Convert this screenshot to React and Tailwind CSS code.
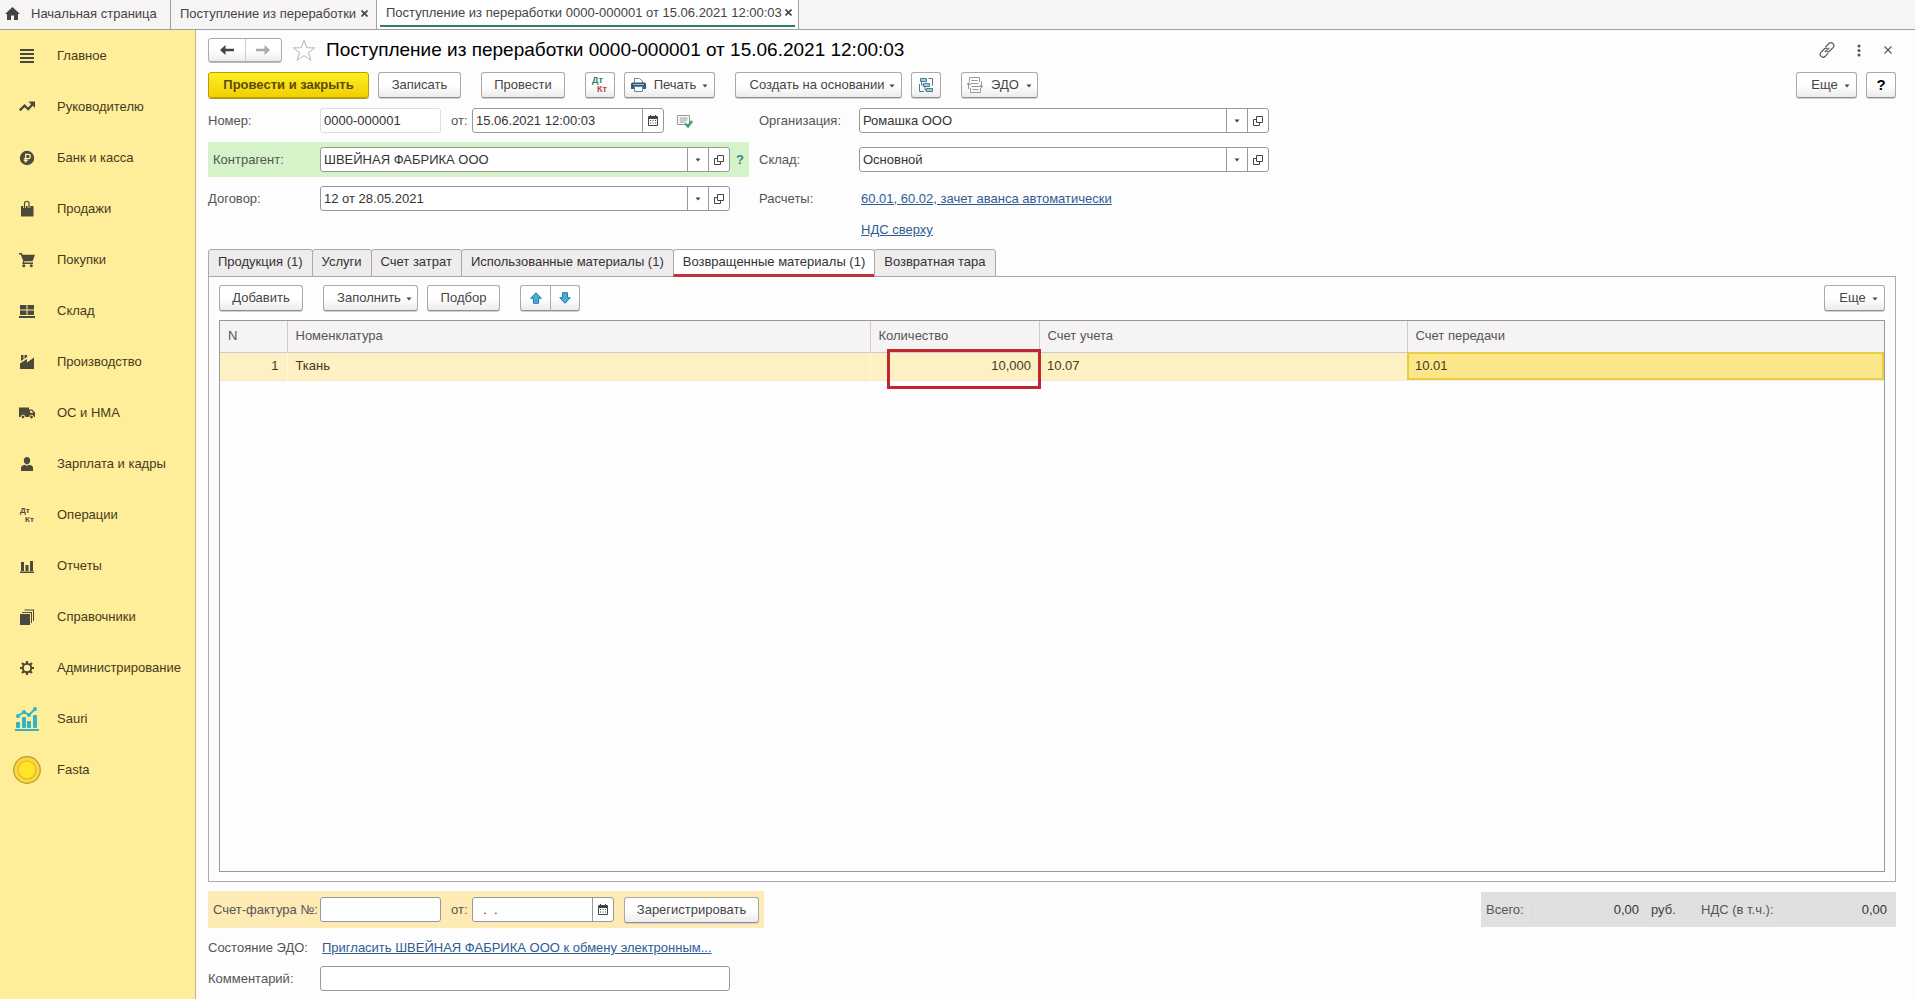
import React, { useState } from 'react'

const menu = [
  { title: "Главное", icon: "main" },
  { title: "Руководителю", icon: "trend" },
  { title: "Банк и касса", icon: "bank" },
  { title: "Продажи", icon: "bag" },
  { title: "Покупки", icon: "cart" },
  { title: "Склад", icon: "store" },
  { title: "Производство", icon: "factory" },
  { title: "ОС и НМА", icon: "truck" },
  { title: "Зарплата и кадры", icon: "person" },
  { title: "Операции", icon: "dtkt" },
  { title: "Отчеты", icon: "report" },
  { title: "Справочники", icon: "books" },
  { title: "Администрирование", icon: "gear" },
  { title: "Sauri", icon: "sauri" },
  { title: "Fasta", icon: "fasta" },
];

const tabs = [
  "Продукция (1)",
  "Услуги",
  "Счет затрат",
  "Использованные материалы (1)",
  "Возвращенные материалы (1)",
  "Возвратная тара",
];

function MenuIcon({ name }) {
  if (name === "dtkt") {
    return (
      <svg width="16" height="16" viewBox="0 0 16 16" fill="currentColor" fontFamily="Liberation Sans, sans-serif" fontWeight="bold" fontSize="8">
        <text x="1" y="6">Дт</text>
        <text x="6" y="15">Кт</text>
      </svg>
    );
  }
  if (name === "sauri") {
    return (
      <svg width="24" height="26" viewBox="0 0 24 26" fill="none">
        <g fill="#2fb4cc">
          <rect x="1" y="16" width="4" height="6" rx="1" />
          <rect x="7" y="11" width="4" height="11" rx="1" />
          <rect x="12" y="15" width="4" height="7" rx="1" />
          <rect x="18" y="9" width="4" height="13" rx="1" />
          <rect x="0" y="23" width="24" height="2" />
          <circle cx="3" cy="10" r="2" />
          <circle cx="9" cy="6" r="2" />
          <circle cx="14" cy="9" r="2" />
          <circle cx="20" cy="3" r="2" />
        </g>
        <path d="M3 10l6-4 5 3 6-6" stroke="#2fb4cc" strokeWidth="1.8" />
      </svg>
    );
  }
  if (name === "fasta") {
    return (
      <svg width="28" height="28" viewBox="0 0 28 28">
        <circle cx="14" cy="14" r="13.3" fill="#fbd63c" stroke="#b79a2c" strokeWidth="1.2" />
        <circle cx="14" cy="14" r="9" fill="#ffe525" stroke="#e0b52c" strokeWidth="1.2" />
      </svg>
    );
  }
  return (
    <svg width="16" height="16" viewBox="0 0 16 16" fill="currentColor" className="overflow-visible">
      {name === "main" && <path d="M1 1h14v2H1zM1 5h14v2H1zM1 9h14v2H1zM1 13h14v2H1z" />}
      {name === "trend" && <path d="M9.500 2.500H16V9l-2.200-2.200L9.200 11.700 5.600 8.200 1.600 12.200 0 10.600 5.600 5l3.500 3.500 2.900-3.300z" />}
      {name === "bank" && (
        <>
          <circle cx="8" cy="8" r="7.200" />
          <path d="M6.700 12.500V4.300h2.500a2.100 2.100 0 010 4.300H4.800M4.800 10.500h4" fill="none" stroke="#ffee99" strokeWidth="1.300" />
        </>
      )}
      {name === "bag" && (
        <>
          <path d="M2 5h12.500v10.500H2z" />
          <path d="M5.500 7V2.500a2.200 2.200 0 014.500 0V7" fill="none" stroke="#ffee99" strokeWidth="2.600" />
          <path d="M5.500 7V2.500a2.200 2.200 0 014.500 0V7" fill="none" stroke="currentColor" strokeWidth="1.200" />
        </>
      )}
      {name === "cart" && (
        <>
          <path d="M0 1h2.800l0.800 1.800H16L13.600 9.300H5.500L5 10.600h9V12H3.200l1-3L1.700 2.400H0z" />
          <circle cx="4.800" cy="13.800" r="1.500" />
          <circle cx="12.300" cy="13.800" r="1.500" />
        </>
      )}
      {name === "truck" && (
        <>
          <path d="M0 2.500h10v2h3.200L16 7.500V12H0z" />
          <path d="M11 5.700h1.700l1.700 2H11z" fill="#ffee99" />
          <circle cx="4" cy="12" r="1.900" stroke="#ffee99" />
          <circle cx="12.500" cy="12" r="1.900" stroke="#ffee99" />
        </>
      )}
      {name === "store" && <path d="M1 2h6.500v4.500H1zM8.500 2H15v4.500H8.500zM1 7.500h6.500V12H1zM8.500 7.500H15V12H8.500zM0 13h16v2H0z" />}
      {name === "factory" && <path d="M1 15V9.500L8 5v3.500l7-5V15zM2 1h2.500v4.300L2 7zM5.500 1H8v2L5.500 4.700z" />}
      {name === "person" && <path d="M8 1c2 0 3.200 1.500 3.200 3.600C11.200 6.800 9.800 8.500 8 8.500S4.800 6.800 4.800 4.600C4.800 2.500 6 1 8 1zM2 15v-3c0-2 1.500-2.800 3.800-3.300Q8 10.500 10.200 8.700C12.500 9.200 14 10 14 12v3z" />}
      {name === "report" && <path d="M1 13.500h14V15H1zM2 4h3v9H2zM6.500 7h3v6h-3zM11 3h3v10h-3z" />}
      {name === "books" && <path d="M1 5h10v11H1zM3 3h10v11h-1V4H3zM5.500 0.500H15V12h-1V1.500H5.500z" />}
      {name === "gear" && (
        <g fill="none" stroke="currentColor">
          <circle cx="8" cy="8" r="4.200" strokeWidth="2" />
          <path d="M8 1v2.500M8 12.500V15M1 8h2.500M12.500 8H15M3 3l1.800 1.800M11.200 11.200L13 13M3 13l1.800-1.800M11.200 4.800L13 3" strokeWidth="2.200" />
        </g>
      )}
    </svg>
  );
}

function Caret() {
  return (
    <svg width="6" height="5" viewBox="0 0 6 5" fill="#444" className="shrink-0">
      <path d="M0.500 1.500h5L3 4.500z" />
    </svg>
  );
}

function CalendarIcon() {
  return (
    <svg width="10" height="11" viewBox="0 0 10 11">
      <path d="M1 1h8a1 1 0 011 1v8a1 1 0 01-1 1H1a1 1 0 01-1-1V2a1 1 0 011-1zM1 4v6h8V4z" fill="#444" fillRule="evenodd" />
      <path d="M2 0h1v2H2zM7 0h1v2H7zM2 5h1v1H2zM4.500 5h1v1h-1zM7 5h1v1H7zM2 7.500h1v1H2zM4.500 7.500h1v1h-1zM7 7.500h1v1H7z" fill="#444" />
    </svg>
  );
}

function OpenIcon() {
  return (
    <svg width="10" height="10" viewBox="0 0 10 10" fill="none" stroke="#444">
      <path d="M3.500 0.500h6v6h-6zM3.500 3.500h-3v6h6v-3" />
    </svg>
  );
}

function Button({ children, className = "", ...rest }) {
  return (
    <button
      type="button"
      className={"flex h-[26px] shrink-0 items-center justify-center rounded-[3px] border border-[#a9a9a9] border-b-[#8f8f8f] bg-linear-to-b from-white from-50% to-[#ececec] text-[#444] whitespace-nowrap shadow-[0_1px_0_#cfcfcf] " + className}
      {...rest}
    >
      {children}
    </button>
  );
}

function ComboField({ id, value, className = "" }) {
  const [text, setText] = useState(value);
  return (
    <div className={"flex h-[25px] w-[410px] rounded-[3px] border border-[#999] bg-white " + className}>
      <input id={id} type="text" className="min-w-0 flex-1 px-[3px] text-[#333] outline-none" value={text} onChange={(e) => setText(e.target.value)} />
      <button type="button" aria-label="Выбрать" className="flex w-[21px] items-center justify-center border-l border-[#999]"><Caret /></button>
      <button type="button" aria-label="Открыть" className="flex w-[21px] items-center justify-center border-l border-[#999]"><OpenIcon /></button>
    </div>
  );
}

function DateField({ id, value, className = "" }) {
  const [text, setText] = useState(value);
  return (
    <div className={"flex h-[25px] rounded-[3px] border border-[#999] bg-white " + className}>
      <input id={id} type="text" className="min-w-0 flex-1 px-[3px] text-[#333] outline-none" value={text} onChange={(e) => setText(e.target.value)} />
      <button type="button" aria-label="Календарь" className="flex w-[21px] items-center justify-center border-l border-[#999]"><CalendarIcon /></button>
    </div>
  );
}

function TopTabs() {
  return (
    <nav className="flex h-[30px] border-b border-[#a0a0a0] bg-[#f6f4f5] text-[#444]">
      <a href="#home" className="flex w-[171px] items-center gap-[11px] border-r border-[#a0a0a0] pb-[2px] pl-[5px] whitespace-nowrap">
        <svg width="15" height="13" viewBox="0 0 15 13" fill="#444">
          <path d="M7.500 0L15 7h-2v6H9V8.500H6V13H2V7H0z" />
        </svg>
        Начальная страница
      </a>
      <div className="flex w-[206px] items-center justify-between border-r border-[#a0a0a0] pr-2 pb-[2px] pl-[9px] whitespace-nowrap">
        <a href="#list">Поступление из переработки</a>
        <CloseButton />
      </div>
      <div className="flex w-[422px] border-r border-[#a0a0a0] bg-white px-[3px]">
        <div className="mb-[2px] flex flex-1 items-center justify-between border-b-2 border-[#2c8061] pr-[3px] pl-[6px] whitespace-nowrap">
          <a href="#doc">Поступление из переработки 0000-000001 от 15.06.2021 12:00:03</a>
          <CloseButton />
        </div>
      </div>
    </nav>
  );
}

function CloseButton() {
  return (
    <button type="button" aria-label="Закрыть">
      <svg width="7" height="7" viewBox="0 0 7 7" stroke="#444" strokeWidth="1.600">
        <path d="M0.500 0.500l6 6M6.500 0.500l-6 6" />
      </svg>
    </button>
  );
}

function Sidebar() {
  return (
    <aside className="w-[196px] shrink-0 border-r border-[#bdb68c] bg-[#ffee99]">
      {menu.map((item) => (
        <a key={item.title} href={"#" + item.icon} className="flex h-[51px] items-center text-[#463a1c] whitespace-nowrap">
          <span className="ml-[13px] mr-4 flex w-7 justify-center text-[#4b483c]"><MenuIcon name={item.icon} /></span>
          {item.title}
        </a>
      ))}
    </aside>
  );
}

function TitleBar() {
  return (
    <div className="flex h-6 items-center">
      <div className="flex h-6 w-[74px] rounded-[3px] border border-[#a9a9a9] bg-linear-to-b from-white from-50% to-[#ececec] shadow-[0_1px_0_#bbb]">
        <button type="button" aria-label="Назад" className="flex flex-1 items-center justify-center border-r border-[#ccc]">
          <svg width="14" height="10" viewBox="0 0 14 10" fill="#444"><path d="M0 5l5.500-5v3.700H14v2.600H5.500V10z" /></svg>
        </button>
        <button type="button" aria-label="Вперед" className="flex flex-1 items-center justify-center">
          <svg width="14" height="10" viewBox="0 0 14 10" fill="#aaa"><path d="M14 5L8.500 0v3.700H0v2.600h8.500V10z" /></svg>
        </button>
      </div>
      <button type="button" aria-label="В избранное" className="mx-[10px]">
        <svg width="24" height="23" viewBox="0 0 24 23" fill="#fff" stroke="#b4b4b4">
          <path d="M12 1.500l2.700 7.300h8l-6.300 4.700 2.400 7.800-6.800-4.700-6.800 4.700 2.400-7.800L1.300 8.800h8z" />
        </svg>
      </button>
      <h1 className="text-[19px] leading-6 text-black whitespace-nowrap">Поступление из переработки 0000-000001 от 15.06.2021 12:00:03</h1>
      <div className="ml-auto flex items-center gap-5 pr-1">
        <button type="button" aria-label="Ссылка">
          <svg width="16" height="16" viewBox="0 0 16 16" fill="none" stroke="#555" strokeWidth="1.200" className="mr-[-1px]">
            <path d="M6.500 5l3.300-3.300c2.800-2.600 6.800 1.200 4.200 4L10.700 9c-0.900 0.800-2 1-3 0.500M9.300 11.200L6.200 14.300c-2.800 2.600-6.800-1.200-4.200-4L5.200 7c0.900-0.800 2-1 3-0.500M5.800 10.200l4.400-4.400" />
          </svg>
        </button>
        <button type="button" aria-label="Меню" className="px-[3px]">
          <svg width="4" height="13" viewBox="0 0 4 13" fill="#555">
            <circle cx="2" cy="2" r="1.500" /><circle cx="2" cy="6.500" r="1.500" /><circle cx="2" cy="11" r="1.500" />
          </svg>
        </button>
        <button type="button" aria-label="Закрыть форму">
          <svg width="8" height="8" viewBox="0 0 8 8" stroke="#555" strokeWidth="1.100"><path d="M0.500 0.500l7 7M7.500 0.500l-7 7" /></svg>
        </button>
      </div>
    </div>
  );
}

function Toolbar() {
  return (
    <div className="mt-[10px] flex">
      <button type="button" className="h-[26px] w-[161px] rounded-[3px] border border-[#b79c0c] bg-linear-to-b from-[#ffee22] to-[#f0d000] font-bold text-[#5c4b08] shadow-[0_1px_0_#b79c0c]">
        Провести и закрыть
      </button>
      <Button className="ml-[9px] w-[83px]">Записать</Button>
      <Button className="ml-5 w-[84px]">Провести</Button>
      <Button className="ml-5 w-[30px]" aria-label="Проводки">
        <svg width="18" height="18" viewBox="0 0 18 18" fontFamily="Liberation Sans, sans-serif" fontWeight="bold" fontSize="9">
          <text x="1" y="7" fill="#2c8061">Дт</text>
          <text x="6" y="16" fill="#b8434f">Кт</text>
        </svg>
      </Button>
      <Button className="ml-[9px] w-[91px]">
        <svg width="15" height="14" viewBox="0 0 15 14">
          <path d="M3.500 5V0.500h5L11.500 3v2" fill="#fff" stroke="#5f88a8" />
          <path d="M1.500 4.500h12A1.500 1.500 0 0115 6v5h-3V8.500H3V11H0V6a1.500 1.500 0 011.500-1.500z" fill="#34597a" />
          <path d="M3.500 8.500h8v5h-8z" fill="#fff" stroke="#5f88a8" />
          <path d="M2 6.500h11" stroke="#9db9cd" />
        </svg>
        <span className="mr-[6px] ml-2">Печать</span>
        <Caret />
      </Button>
      <Button className="ml-5 w-[167px]"><span className="mr-[5px] ml-2">Создать на основании</span><Caret /></Button>
      <Button className="ml-[9px] w-[30px]" aria-label="Структура подчиненности">
        <svg width="16" height="16" viewBox="0 0 16 16" fill="#a9cbd8" stroke="#4a7d94">
          <path d="M2.500 1.500h6v3h-6zM5.500 6.500h6v3h-6zM8.500 11.500h6v3h-6z" />
          <path d="M10.500 1.500h4v7M1.500 7v7.500H6M3.500 5v3H5M7 10v3h1" fill="none" />
        </svg>
      </Button>
      <Button className="ml-5 w-[77px]">
        <svg width="16" height="16" viewBox="0 0 16 16" fill="none" stroke="#999">
          <path d="M2.500 5V0.500h10V5M3.500 11v4.500h10V11M4.500 3.500h6M3.500 6.500h8M4.500 9.500h8M5.500 12.500h6M1.500 12V7.500h2M14.500 4.500V9h-2" />
          <path d="M1.500 5L3.500 8h-4zM14.500 11.500l-2-3h4z" fill="#999" stroke="none" />
        </svg>
        <span className="mr-[7px] ml-2">ЭДО</span>
        <Caret />
      </Button>
      <Button className="ml-auto w-[61px]"><span className="mr-[6px] ml-2">Еще</span><Caret /></Button>
      <Button className="ml-[9px] w-[30px]"><b className="text-[15px] text-black">?</b></Button>
    </div>
  );
}

function HeaderFields() {
  const [number, setNumber] = useState("0000-000001");
  return (
    <div className="mt-[5px] flex gap-[10px] text-[#555]">
      <div className="w-[541px] shrink-0">
        <div className="flex h-[35px] items-center">
          <label htmlFor="number" className="w-28">Номер:</label>
          <input id="number" type="text" className="h-[25px] w-[121px] rounded-[3px] border border-[#ddd] bg-white px-[3px] text-[#333]" value={number} onChange={(e) => setNumber(e.target.value)} />
          <label htmlFor="date" className="w-[31px] pl-[10px]">от:</label>
          <DateField id="date" value="15.06.2021 12:00:03" className="w-[192px]" />
          <svg width="16" height="14" viewBox="0 0 16 14" fill="none" className="ml-[13px]">
            <path d="M0.500 1.500h12v9h-12zM2.500 4h8M2.500 6h8M2.500 8h6" stroke="#999" />
            <path d="M8 9.500l3 3 4-5.500" stroke="#3fa463" strokeWidth="2.400" />
          </svg>
        </div>
        <div className="mt-1 flex h-[35px] items-center bg-[#d6f2c8]">
          <label htmlFor="partner" className="w-28 pl-[5px]">Контрагент:</label>
          <ComboField id="partner" value="ШВЕЙНАЯ ФАБРИКА ООО" />
          <button type="button" className="ml-[6px] font-bold text-[#2c8a8a]">?</button>
        </div>
        <div className="mt-1 flex h-[35px] items-center">
          <label htmlFor="contract" className="w-28">Договор:</label>
          <ComboField id="contract" value="12 от 28.05.2021" />
        </div>
      </div>
      <div>
        <div className="flex h-[35px] items-center">
          <label htmlFor="org" className="w-[100px]">Организация:</label>
          <ComboField id="org" value="Ромашка ООО" />
        </div>
        <div className="mt-1 flex h-[35px] items-center">
          <label htmlFor="store" className="w-[100px]">Склад:</label>
          <ComboField id="store" value="Основной" />
        </div>
        <div className="mt-1 flex h-[35px] items-center">
          <span className="w-[102px]">Расчеты:</span>
          <a href="#settlements" className="text-[#2f5c94] underline">60.01, 60.02, зачет аванса автоматически</a>
        </div>
        <a href="#vat" className="ml-[102px] block h-[28px] pt-[6px] text-[#2f5c94] underline">НДС сверху</a>
      </div>
    </div>
  );
}

function Materials() {
  const [active, setActive] = useState(4);
  return (
    <div className="mt-[5px] flex flex-1 flex-col">
      <div className="relative z-10 -mb-[1px] flex h-[28px] items-stretch text-[#333]">
        {tabs.map((tab, i) => (
          <button
            key={tab}
            type="button"
            onClick={() => setActive(i)}
            className={"-mr-[1px] rounded-t-[3px] border px-[9px] whitespace-nowrap " + (i === active ? "border-[#aaa] border-b-[3px] border-b-[#c0323c] bg-white" : "border-[#aaa] bg-[#eeecec] pb-[2px]")}
          >
            {tab}
          </button>
        ))}
      </div>
      <div className="flex flex-1 flex-col border border-[#aaa] px-[10px] pt-2 pb-[9px]">
        <div className="flex">
          <Button className="w-[84px]">Добавить</Button>
          <Button className="ml-5 w-[95px]"><span className="mr-[5px] ml-2">Заполнить</span><Caret /></Button>
          <Button className="ml-[9px] w-[73px]">Подбор</Button>
          <Button className="ml-5 w-[31px] rounded-r-none" aria-label="Вверх">
            <svg width="12" height="12" viewBox="0 0 12 12" fill="#45aede" stroke="#2b7ba3"><path d="M6 0.700l5.300 5.600H8.500v5h-5v-5H0.700z" /></svg>
          </Button>
          <Button className="-ml-[1px] w-[30px] rounded-l-none" aria-label="Вниз">
            <svg width="12" height="12" viewBox="0 0 12 12" fill="#45aede" stroke="#2b7ba3"><path d="M6 11.300L0.700 5.700h2.800v-5h5v5h2.800z" /></svg>
          </Button>
          <Button className="ml-auto w-[61px]"><span className="mr-[6px] ml-2">Еще</span><Caret /></Button>
        </div>
        <div className="mt-[9px] flex-1 border border-[#999]">
          <table className="w-full table-fixed border-collapse text-left">
            <colgroup>
              <col className="w-[67px]" />
              <col />
              <col className="w-[169px]" />
              <col className="w-[368px]" />
              <col className="w-[477px]" />
            </colgroup>
            <thead>
              <tr className="h-[31px] border-b border-[#ccc] bg-[#f5f3f4] text-[#555]">
                <th className="border-r border-[#ccc] px-2 font-normal">N</th>
                <th className="border-r border-[#ccc] px-2 font-normal">Номенклатура</th>
                <th className="border-r border-[#ccc] px-2 font-normal">Количество</th>
                <th className="border-r border-[#ccc] px-2 font-normal">Счет учета</th>
                <th className="px-2 font-normal">Счет передачи</th>
              </tr>
            </thead>
            <tbody>
              <tr className="h-7 border-b border-[#f3ead0] bg-[#fdf1c4] text-[#463a1c]">
                <td className="border-r border-[#fff9e4] px-2 text-right">1</td>
                <td className="border-r border-[#fff9e4] px-2">Ткань</td>
                <td className="relative px-2 text-right">
                  10,000
                  <div className="pointer-events-none absolute -top-1 -right-[2px] -bottom-[9px] left-4 border-3 border-[#c0282f]" />
                </td>
                <td className="px-2">10.07</td>
                <td className="bg-[#fce68a] px-2 outline-2 -outline-offset-2 outline-[#e8cd45]">10.01</td>
              </tr>
            </tbody>
          </table>
        </div>
      </div>
    </div>
  );
}

function Footer() {
  const [invoice, setInvoice] = useState("");
  const [comment, setComment] = useState("");
  return (
    <div className="text-[#555]">
      <div className="mt-[9px] flex items-center justify-between">
        <div className="flex h-[37px] w-[556px] items-center bg-[#fdeab5]">
          <label htmlFor="invoice" className="w-28 pl-[5px] whitespace-nowrap">Счет-фактура №:</label>
          <input id="invoice" type="text" className="h-[25px] w-[121px] rounded-[3px] border border-[#999] bg-white px-[3px]" value={invoice} onChange={(e) => setInvoice(e.target.value)} />
          <label htmlFor="invoiceDate" className="w-[31px] pl-[10px]">от:</label>
          <DateField id="invoiceDate" value="  .  ." className="w-[142px]" />
          <Button className="ml-[10px] w-[135px]">Зарегистрировать</Button>
        </div>
        <div className="flex h-[35px] w-[415px] items-center bg-[#e0e0e0] px-[5px]">
          <label htmlFor="total" className="w-[45px]">Всего:</label>
          <input id="total" type="text" readOnly className="h-[25px] w-[112px] border border-[#dcdcdc] px-[3px] text-right text-[#333]" value="0,00" />
          <span className="ml-2 w-[50px] text-[#444]">руб.</span>
          <label htmlFor="vatSum" className="w-20 whitespace-nowrap">НДС (в т.ч.):</label>
          <input id="vatSum" type="text" readOnly className="h-[25px] min-w-0 flex-1 border border-[#dcdcdc] px-[3px] text-right text-[#333]" value="0,00" />
        </div>
      </div>
      <div className="mt-2 flex h-6 items-center">
        <span className="w-[114px]">Состояние ЭДО:</span>
        <a href="#edo" className="text-[#2f5c94] underline">Пригласить ШВЕЙНАЯ ФАБРИКА ООО к обмену электронным...</a>
      </div>
      <div className="mt-[6px] flex items-center pb-2">
        <label htmlFor="comment" className="w-28">Комментарий:</label>
        <input id="comment" type="text" className="h-[25px] w-[410px] rounded-[3px] border border-[#999] bg-white px-[3px]" value={comment} onChange={(e) => setComment(e.target.value)} />
      </div>
    </div>
  );
}

function App() {
  return (
    <div className="flex min-h-screen flex-col bg-[#fdfdfd] font-['Liberation_Sans',Arial,sans-serif] text-[13px] leading-4">
      <TopTabs />
      <div className="flex flex-1">
        <Sidebar />
        <main className="flex min-w-0 flex-1 flex-col pt-2 pr-[19px] pl-3">
          <TitleBar />
          <Toolbar />
          <HeaderFields />
          <Materials />
          <Footer />
        </main>
      </div>
    </div>
  );
}

export default App
